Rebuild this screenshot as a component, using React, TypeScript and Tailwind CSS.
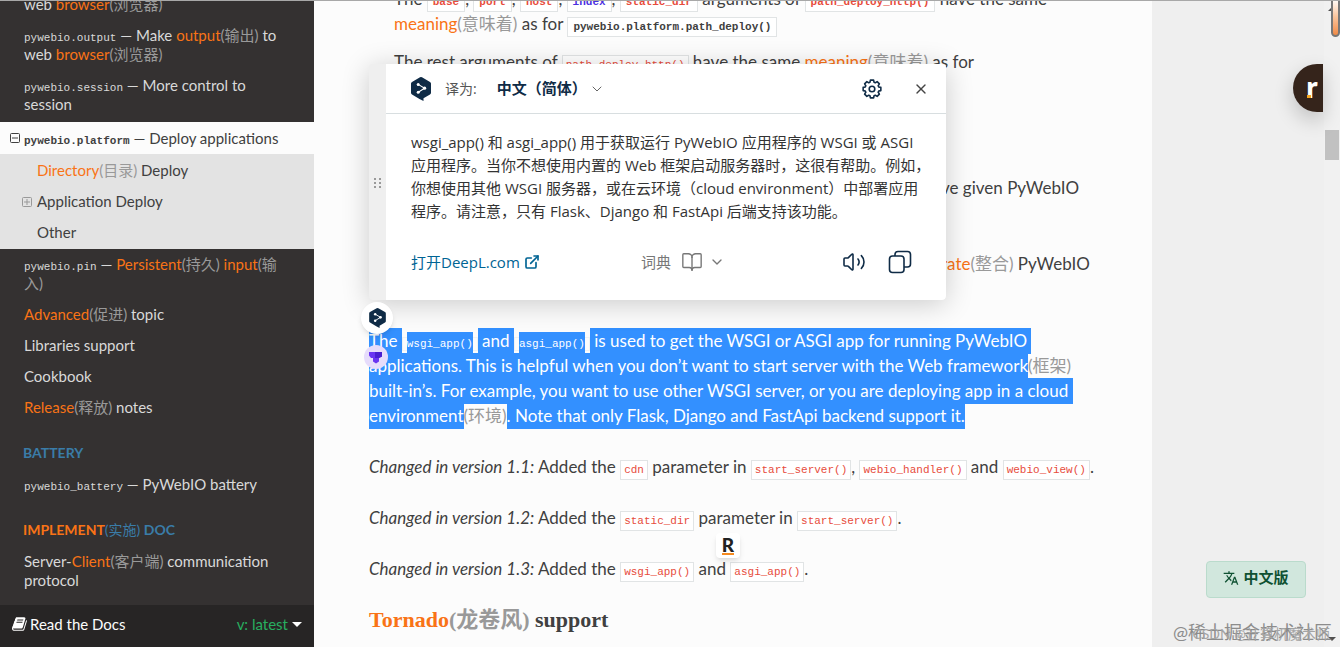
import type { ReactNode } from "react";
import { BookOpen, ChevronDown, ExternalLink, Volume2, X } from "lucide-react";
import { MdTranslate } from "react-icons/md";

const Code = ({ children }: { children: ReactNode }) => (
  <code className="border border-[#e1e4e5] bg-white px-[3px] py-[3px] font-['Liberation_Mono',monospace] text-[11px] leading-none text-[#e74c3c]">
    {children}
  </code>
);

// bold cross reference, coloured by the caller
const Ref = ({ children, className }: { children: ReactNode; className: string }) => (
  <code className="border border-[#e1e4e5] bg-white px-[5px] py-[3px] font-['Liberation_Mono',monospace] text-[11px] leading-none font-bold">
    <span className={className}>{children}</span>
  </code>
);

// a word with its translation in brackets
const Word = ({ en, zh }: { en: string; zh: string }) => (
  <>
    <span className="text-[#f97316]">{en}</span>
    <span className="text-[#999]">({zh})</span>
  </>
);

const Mono = ({ children }: { children: ReactNode }) => (
  <code className="font-['Liberation_Mono',monospace] text-[11px] leading-none">{children}</code>
);

const Sel = ({ children }: { children: ReactNode }) => (
  <span className="bg-[#3390ff] pt-[2px] pb-[3px] whitespace-pre text-white">{children}</span>
);

const SelCode = ({ children }: { children: ReactNode }) => (
  <code className="border border-[#f0f2f3] px-[4px] font-['Liberation_Mono',monospace] text-[11px] leading-none text-white">
    <span className="bg-[#3390ff] py-[6px]">{children}</span>
  </code>
);

const NavItem = ({ children }: { children: ReactNode }) => (
  <li>
    <a href="#" className="block py-[6px] pr-8 pl-6">
      {children}
    </a>
  </li>
);

const DeepLLogo = ({ className }: { className: string }) => (
  <svg viewBox="0 0 20 24" className={className}>
    <path d="M9 .3a2 2 0 0 1 2 0l8 4.6a2 2 0 0 1 1 1.7v9.200a2 2 0 0 1-1 1.700L12.500 21.300V24L8.500 21.900 1 17.500a2 2 0 0 1-1-1.700V6.600a2 2 0 0 1 1-1.700z" fill="#0f2b46" />
    <path d="M7.200 7.400 13.600 11.200 7.200 15.200" stroke="#fff" strokeWidth="1.100" fill="none" />
    <circle cx="7.200" cy="7.400" r="1.500" fill="#fff" />
    <circle cx="13.600" cy="11.200" r="1.600" fill="#fff" />
    <circle cx="7.200" cy="15.200" r="1.500" fill="#fff" />
  </svg>
);

const BookIcon = () => (
  <svg viewBox="0 0 1792 1792" className="size-4 fill-white">
    <path d="M1639 478q40 57 18 129l-275 906q-19 64-76.500 107.500t-122.500 43.500h-923q-77 0-148.500-53.500t-99.500-131.500q-24-67-2-127 0-4 3-27t4-37q1-8-3-21.500t-3-19.500q2-11 8-21t16.500-23.500 16.500-23.500q23-38 45-91.500t30-91.500q3-10 .5-30t-.5-28q3-11 17-28t17-23q21-36 42-92t25-90q1-9-2.500-32t.5-28q4-13 22-30.500t22-22.500q19-26 42.500-84.500t27.500-96.500q1-8-3-25.500t-2-26.500q2-8 9-18t18-23 17-21q8-12 16.500-30.500t15-35 16-36 19.500-32 26.500-23.500 36-11.500 47.500 5.500l-1 3q38-9 51-9h761q74 0 114 56t18 130l-274 906q-36 119-71.500 153.500t-128.500 34.500h-869q-27 0-38 15-11 16-1 43 24 70 144 70h923q29 0 56-15.500t35-41.500l300-987q7-22 5-57 38 15 59 43zm-1064 2q-4 13 2 22.500t20 9.500h608q13 0 25.500-9.500t16.500-22.500l21-64q4-13-2-22.500t-20-9.500h-608q-13 0-25.500 9.500t-16.500 22.500zm-83 256q-4 13 2 22.500t20 9.500h608q13 0 25.500-9.500t16.500-22.500l21-64q4-13-2-22.500t-20-9.500h-608q-13 0-25.500 9.500t-16.500 22.500z" />
  </svg>
);

// eight teeth, four outline points each
const gearPoints = Array.from({ length: 8 }, (_, i) =>
  [
    [-0.3, 7],
    [-0.18, 9],
    [0.18, 9],
    [0.3, 7],
  ]
    .map(([da, r]) => {
      const a = (i * Math.PI) / 4 + da;
      return `${(11 + r * Math.cos(a)).toFixed(2)},${(11 + r * Math.sin(a)).toFixed(2)}`;
    })
    .join(" ")
).join(" ");

const Gear = () => (
  <svg viewBox="0 0 22 22" className="size-[22px] fill-none stroke-[#0f2b46]" strokeWidth="1.600" strokeLinejoin="round">
    <polygon points={gearPoints} />
    <circle cx="11" cy="11" r="2.800" />
  </svg>
);

const CopyIcon = () => (
  <svg viewBox="0 0 24 24" className="size-6 fill-none stroke-[#0f2b46]" strokeWidth="1.600">
    <rect x="1.500" y="6" width="14.500" height="16.500" rx="3" />
    <path d="M7 6V4.500a3 3 0 0 1 3-3h9.500a3 3 0 0 1 3 3V14a3 3 0 0 1-3 3H16" />
  </svg>
);

const Expander = ({ open = false }: { open?: boolean }) => (
  <svg viewBox="0 0 10 10" className="size-[10px] shrink-0 fill-none stroke-current">
    <rect x=".5" y=".5" width="9" height="9" rx="1" />
    <path d={open ? "M2 5h6" : "M2 5h6M5 2v6"} />
  </svg>
);

const Sidebar = () => (
  <nav className="flex w-[314px] shrink-0 flex-col bg-[#343131] text-[15px] leading-[19px] text-[#d9d9d9]">
    <div className="min-h-0 flex-1 overflow-hidden">
      <ul className="-mt-3">
        <NavItem>
          web <Word en="browser" zh="浏览器" />
        </NavItem>
        <NavItem>
          <Mono>pywebio.output</Mono> — Make <Word en="output" zh="输出" /> to web <Word en="browser" zh="浏览器" />
        </NavItem>
        <NavItem>
          <Mono>pywebio.session</Mono> — More control to session
        </NavItem>
        <li className="mt-0.5 text-[#404040]">
          <a href="#" className="flex h-8 items-center gap-1 bg-[#fcfcfc] pl-[10px]">
            <Expander open />
            <span>
              <b>
                <Mono>pywebio.platform</Mono>
              </b>{" "}
              — Deploy applications
            </span>
          </a>
          <ul className="bg-[#e3e3e3] py-px">
            <li>
              <a href="#" className="block py-[6px] pl-[37px]">
                <Word en="Directory" zh="目录" /> Deploy
              </a>
            </li>
            <li>
              <a href="#" className="flex items-center gap-[5px] py-[6px] pl-[22px]">
                <span className="text-[#999]">
                  <Expander />
                </span>
                Application Deploy
              </a>
            </li>
            <li>
              <a href="#" className="block py-[6px] pl-[37px]">
                Other
              </a>
            </li>
          </ul>
        </li>
        <NavItem>
          <Mono>pywebio.pin</Mono> — <Word en="Persistent" zh="持久" /> <Word en="input" zh="输入" />
        </NavItem>
        <NavItem>
          <Word en="Advanced" zh="促进" /> topic
        </NavItem>
        <NavItem>Libraries support</NavItem>
        <NavItem>Cookbook</NavItem>
        <NavItem>
          <Word en="Release" zh="释放" /> notes
        </NavItem>
      </ul>
      <h3 className="mt-3 flex h-[34px] items-center pl-[23px] text-[14px] font-bold text-[#3a7ca8]">BATTERY</h3>
      <ul>
        <NavItem>
          <Mono>pywebio_battery</Mono> — PyWebIO battery
        </NavItem>
      </ul>
      <h3 className="mt-3 flex h-[34px] items-center pl-[23px] text-[14px] font-bold whitespace-pre text-[#3a7ca8]">
        <span className="text-[#f97316]">IMPLEMENT</span>
        <span className="font-normal">(实施)</span> DOC
      </h3>
      <ul>
        <NavItem>
          Server-
          <Word en="Client" zh="客户端" /> communication protocol
        </NavItem>
      </ul>
    </div>
    <div className="flex h-[42px] items-center bg-[#272525] px-3 pb-1 text-[15px] text-[#fcfcfc]">
      <a href="#" className="flex items-center gap-0.5">
        <BookIcon /> Read the Docs
      </a>
      <button className="ml-auto flex items-center gap-1 text-[#27ae60]">
        v: latest
        <svg viewBox="0 0 10 5" className="h-[5px] w-[10px] fill-white">
          <path d="M0 0h10L5 5z" />
        </svg>
      </button>
    </div>
  </nav>
);

const Translator = () => (
  <section className="absolute top-[63px] left-[55px] z-10 flex h-[236px] w-[577px] overflow-hidden rounded bg-[#efefef] shadow-[0_4px_28px_rgba(0,0,0,0.2)]">
    <div className="flex w-[17px] items-center justify-center">
      <svg viewBox="0 0 8 11" className="h-[11px] w-2 fill-[#999]">
        {[1, 5, 9].map((y) => (
          <g key={y}>
            <rect x="0" y={y} width="2" height="2" />
            <rect x="5" y={y} width="2" height="2" />
          </g>
        ))}
      </svg>
    </div>
    <div className="flex flex-1 flex-col rounded-r bg-white font-['Open_Sans','Noto_Sans_CJK_SC',sans-serif] text-[15px] text-[#333]">
      <header className="flex h-[50px] items-center border-b border-[#d8dee0] pr-[17px] pl-[25px]">
        <DeepLLogo className="h-6 w-5" />
        <label htmlFor="target" className="ml-[14px] text-[14px] text-[#555]">
          译为:
        </label>
        <div className="ml-5 flex items-center text-[#0f2b46]">
          <select id="target" className="w-[92px] appearance-none text-[15px] font-bold">
            <option>中文（简体）</option>
          </select>
          <ChevronDown className="size-4 text-[#666]" strokeWidth={1.5} />
        </div>
        <button aria-label="Settings" className="ml-auto">
          <Gear />
        </button>
        <button aria-label="Close" className="ml-[30px] text-[#444]">
          <X className="size-4" strokeWidth={2} />
        </button>
      </header>
      <p className="mt-[17px] pl-[25px] leading-[23px] whitespace-nowrap">
        wsgi_app() 和 asgi_app() 用于获取运行 PyWebIO 应用程序的 WSGI 或 ASGI
        <br />
        应用程序。当你不想使用内置的 Web 框架启动服务器时，这很有帮助。例如，
        <br />
        你想使用其他 WSGI 服务器，或在云环境（cloud environment）中部署应用
        <br />
        程序。请注意，只有 Flask、Django 和 FastApi 后端支持该功能。
      </p>
      <footer className="mt-auto flex h-[76px] items-center pr-[34px] pl-[25px]">
        <a href="#" className="flex w-[230px] items-center gap-1 text-[#006494]">
          打开DeepL.com
          <ExternalLink className="size-4" strokeWidth={2.5} />
        </a>
        <button className="flex items-center text-[#777]">
          词典
          <BookOpen className="ml-2.5 size-[22px]" strokeWidth={1.5} />
          <ChevronDown className="ml-1.5 size-4" strokeWidth={2} />
        </button>
        <button aria-label="Listen" className="ml-auto text-[#0f2b46]">
          <Volume2 className="size-6" strokeWidth={1.6} />
        </button>
        <button aria-label="Copy" className="ml-[22px]">
          <CopyIcon />
        </button>
      </footer>
    </div>
  </section>
);

const Article = () => (
  <main className="relative w-full max-w-[838px] overflow-hidden bg-[#fcfcfc] px-[55px] text-[17px] leading-[25px] text-[#404040]">
    <div className="-mt-[15px] pl-[25px]">
      <p className="mb-[13px] whitespace-nowrap">
        The <Ref className="text-[#e74c3c]">base</Ref>, <Ref className="text-[#e74c3c]">port</Ref>,{" "}
        <Ref className="text-[#e74c3c]">host</Ref>, <Ref className="text-[#4a30e0]">index</Ref>,{" "}
        <Ref className="text-[#e74c3c]">static_dir</Ref> arguments of{" "}
        <Ref className="text-[#e74c3c]">path_deploy_http()</Ref> have the same
        <br />
        <Word en="meaning" zh="意味着" /> as for <Ref className="text-[#404040]">pywebio.platform.path_deploy()</Ref>
      </p>
      <p>
        The rest arguments of <Code>path_deploy_http()</Code> have the same <Word en="meaning" zh="意味着" /> as for
      </p>
    </div>
    <p className="mt-[101px] ml-auto w-[156px]">ve given PyWebIO</p>
    <p className="mt-[51px] ml-auto w-[156px] whitespace-nowrap">
      <Word en="rate" zh="整合" /> PyWebIO
    </p>
    <p className="mt-[52px] mb-[26px] whitespace-nowrap">
      <Sel>The </Sel>
      <SelCode>wsgi_app()</SelCode>
      <Sel> and </Sel>
      <SelCode>asgi_app()</SelCode>
      <Sel> is used to get the WSGI or ASGI app for running PyWebIO </Sel>
      <br />
      <Sel>applications. This is helpful when you don’t want to start server with the Web framework</Sel>
      <span className="text-[#999]">(框架)</span>
      <br />
      <Sel>built-in’s. For example, you want to use other WSGI server, or you are deploying app in a cloud </Sel>
      <br />
      <Sel>environment</Sel>
      <span className="text-[#999]">(环境)</span>
      <Sel>. Note that only Flask, Django and FastApi backend support it.</Sel>
    </p>
    <p className="mb-[26px]">
      <em>Changed in version 1.1:</em> Added the <Code>cdn</Code> parameter in <Code>start_server()</Code>, <Code>webio_handler()</Code> and{" "}
      <Code>webio_view()</Code>.
    </p>
    <p className="mb-[26px]">
      <em>Changed in version 1.2:</em> Added the <Code>static_dir</Code> parameter in <Code>start_server()</Code>.
    </p>
    <p className="mb-[26px]">
      <em>Changed in version 1.3:</em> Added the <Code>wsgi_app()</Code> and <Code>asgi_app()</Code>.
    </p>
    <h2 className="font-['Liberation_Serif','Noto_Sans_CJK_SC',serif] text-[22px] font-bold">
      <Word en="Tornado" zh="龙卷风" /> support
    </h2>

    <Translator />
    <button aria-label="DeepL" className="absolute top-[301px] left-[47px] z-20 flex size-8 items-center justify-center rounded-full bg-white shadow-md">
      <DeepLLogo className="h-5 w-[17px]" />
    </button>
    <button aria-label="Translate" className="absolute top-[344px] left-[50px] z-20 flex size-6 items-center justify-center rounded-full bg-[#e6dcfb]">
      <svg viewBox="0 0 14 13" className="h-[13px] w-[14px]">
        <path d="M0 1h13v4.500l-3 1.500v3.500L7 12.500 4 10.500V7H2L0 4.500z" fill="#6a35f2" />
        <path d="M6 1h7v4.500L10 7H6z" fill="#4a1fd0" />
      </svg>
    </button>
    <button className="absolute top-[532px] left-[402px] z-20 flex h-[25px] w-6 items-center justify-center rounded bg-white shadow-md">
      <span className="border-b-2 border-[#f58a1f] text-[19px] leading-[16px] font-black text-[#222]">R</span>
    </button>
  </main>
);

const App = () => (
  <div className="relative flex h-screen overflow-hidden border-t border-[#a8a8a8] bg-[#efefef] font-['Lato','Noto_Sans_CJK_SC',sans-serif]">
    <Sidebar />
    <Article />

    <div className="absolute top-[63px] right-[17px] z-10 h-12 w-[30px]">
      <button className="flex h-12 w-[30px] items-center justify-center rounded-l-full bg-[#35241b] pb-1 pl-2 text-[30px] leading-none font-black text-white shadow-[0_8px_20px_rgba(0,0,0,0.2)]">
        r
      </button>
      <span className="absolute bottom-[14px] left-[14px] h-[3px] w-1 bg-[#f5a623]" />
    </div>

    <button className="absolute right-[34px] bottom-[49px] flex h-[37px] w-[100px] items-center justify-center gap-1 rounded-sm border border-[#badbcc] bg-[#d1e7dd] pb-1 text-[15px] font-bold text-[#0f5132]">
      <MdTranslate className="size-4" />
      中文版
    </button>

    <div className="absolute right-0 bottom-0 flex h-full w-4 flex-col items-center bg-[#f1f1f1]">
      <svg viewBox="0 0 8 4" className="mt-1.5 h-1 w-2 fill-[#505050]">
        <path d="M0 4h8L4 0z" />
      </svg>
      <div className="mt-[119px] mr-px h-[30px] w-[14px] bg-[#c1c1c1]" />
      <svg viewBox="0 0 8 4" className="mt-auto mb-1.5 h-1 w-2 fill-[#505050]">
        <path d="M0 0h8L4 4z" />
      </svg>
    </div>
    <div className="absolute -top-1 right-0 h-10 w-[9px] rounded-b-md border-2 border-[#777] bg-gradient-to-b from-white via-[#f9c39a] to-[#f08a45]" />

    <div className="absolute right-2 bottom-[2px] text-[18px] leading-[26px] whitespace-nowrap text-[#8c8c8c]">@稀土掘金技术社区</div>
    <div className="absolute right-[10px] bottom-0 text-[14px] leading-[26px] whitespace-nowrap text-[#a5a5a5]">CSDN @计算机魔术师</div>
  </div>
);

export default App;
